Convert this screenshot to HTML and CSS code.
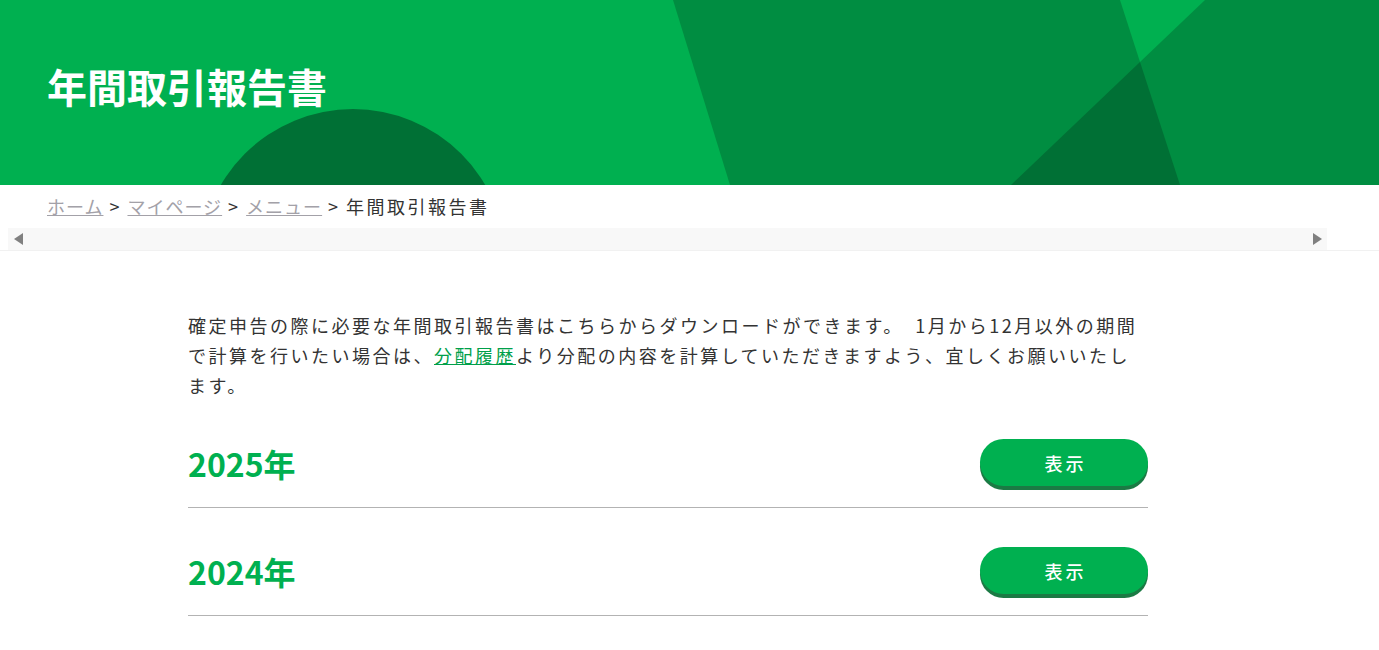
FILE: index.html
```html
<!DOCTYPE html>
<html lang="ja">
<head>
<meta charset="utf-8">
<title>年間取引報告書</title>
<link rel="stylesheet" href="styles.css">
</head>
<body>
<header class="hero">
  <svg class="hero-bg" viewBox="0 0 1379 185" width="1379" height="185" aria-hidden="true">
    <polygon points="673,0 1379,0 1379,185 730,185" fill="#008d41"/>
    <polygon points="1120,0 1205,0 1140,62" fill="#00b050"/>
    <polygon points="1140,62 1011,185 1180,185" fill="#007035"/>
    <circle cx="353" cy="262" r="153" fill="#007035"/>
  </svg>
  <h1 class="hero-title">年間取引報告書</h1>
</header>
<nav class="breadcrumb">
  <a href="#">ホーム</a><span class="sep">&gt;</span><a href="#">マイページ</a><span class="sep">&gt;</span><a href="#">メニュー</a><span class="sep">&gt;</span><span class="current">年間取引報告書</span>
</nav>
<div class="scroll-wrap">
  <div class="scroll-strip">
    <span class="arrow arrow-left"></span>
    <span class="arrow arrow-right"></span>
  </div>
</div>
<main class="main">
  <p class="lead">確定申告の際に必要な年間取引報告書はこちらからダウンロードができます。　1月から12月以外の期間で計算を行いたい場合は、<a href="#" class="lead-link">分配履歴</a>より分配の内容を計算していただきますよう、宜しくお願いいたします。</p>
  <section class="year-row">
    <h2 class="year">2025年</h2>
    <button class="show-btn" type="button">表示</button>
  </section>
  <section class="year-row">
    <h2 class="year">2024年</h2>
    <button class="show-btn" type="button">表示</button>
  </section>
</main>
</body>
</html>
```
FILE: styles.css
```css
* { box-sizing: border-box; }
body {
  margin: 0;
  background: #fff;
  color: #333;
  font-family: "Noto Sans CJK JP", "Noto Sans", sans-serif;
}
.hero {
  position: relative;
  height: 185px;
  background: #00b050;
  overflow: hidden;
}
.hero-bg {
  position: absolute;
  left: 0;
  top: 0;
}
.hero-title {
  position: relative;
  margin: 0;
  padding: 62px 0 0 47px;
  font-size: 40px;
  line-height: 48px;
  font-weight: 700;
  color: #fff;
}
.breadcrumb {
  height: 43px;
  line-height: 43px;
  padding-left: 47px;
  font-size: 18px;
}
.breadcrumb a {
  color: #a3a1a8;
  text-decoration: underline;
  letter-spacing: 1px;
}
.breadcrumb .sep {
  color: #333;
  margin: 0 8px 0 6px;
}
.breadcrumb .current {
  color: #333;
  letter-spacing: 2.5px;
}
.scroll-wrap {
  border-bottom: 1px solid #f1f1f1;
}
.scroll-strip {
  margin: 0 52px 0 8px;
  height: 22px;
  background: #f8f8f8;
  display: flex;
  align-items: center;
  justify-content: space-between;
  padding: 0 5px 0 6px;
}
.arrow {
  width: 0;
  height: 0;
  border-top: 6px solid transparent;
  border-bottom: 6px solid transparent;
}
.arrow-left { border-right: 9px solid #808080; }
.arrow-right { border-left: 9px solid #808080; }
.main {
  width: 960px;
  margin-left: 188px;
  padding-top: 59px;
}
.lead {
  margin: 0;
  padding-right: 4px;
  font-size: 18px;
  line-height: 30px;
  letter-spacing: 2.5px;
  color: #333;
}
.lead-link {
  color: #00a04a;
  text-decoration: underline;
}
.year-row {
  display: flex;
  align-items: center;
  justify-content: space-between;
  padding: 39px 0 21px;
  border-bottom: 1px solid #b3b3b3;
}
.year {
  margin: 0;
  font-size: 32px;
  line-height: 40px;
  font-weight: 700;
  color: #00b050;
}
.show-btn {
  width: 168px;
  height: 47px;
  border: none;
  border-radius: 24px;
  background: #00b050;
  box-shadow: 0 4px 0 #1b7a44;
  color: #fff;
  font-family: inherit;
  font-size: 18px;
  font-weight: 500;
  letter-spacing: 3px;
  padding: 0 0 0 3px;
  cursor: pointer;
}
```
